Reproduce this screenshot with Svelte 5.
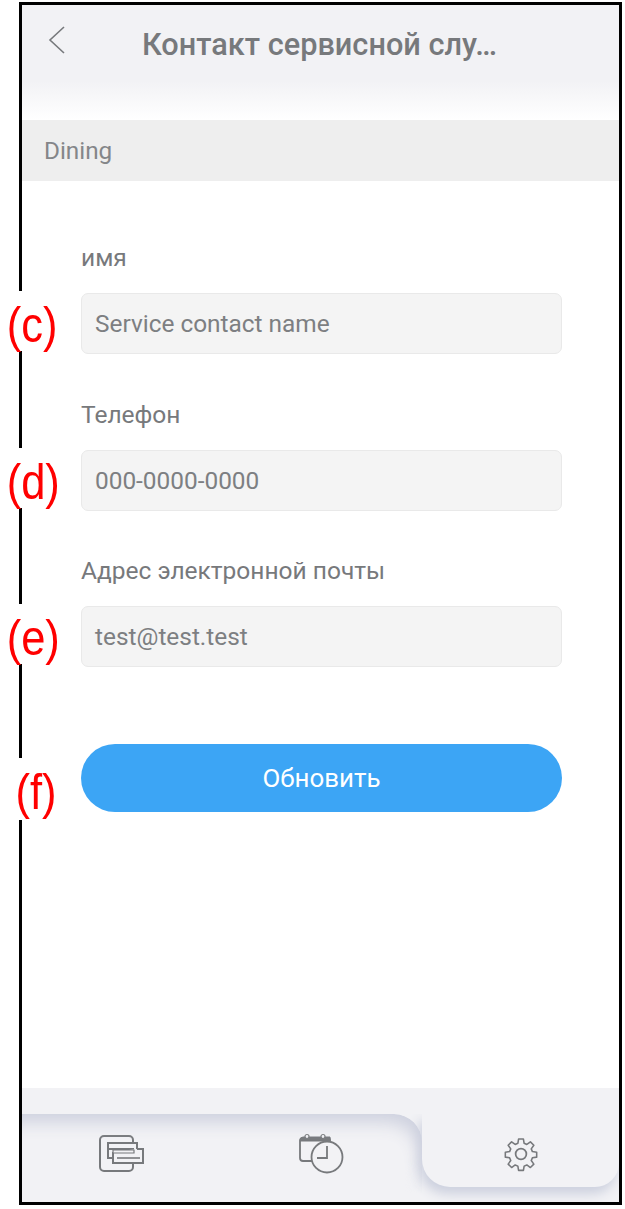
<script>
	const fields = [
		{ label: 'имя', value: 'Service contact name', mark: '(c)' },
		{ label: 'Телефон', value: '000-0000-0000', mark: '(d)' },
		{ label: 'Адрес электронной почты', value: 'test@test.test', mark: '(e)' }
	];
</script>

<div class="page">
	<div class="frame">
		<header class="header">
			<button class="back" aria-label="Назад">
				<svg width="18" height="30" viewBox="0 0 18 30" fill="none">
					<path d="M16 2L2 15L16 28" stroke="#77797c" stroke-width="1.6" />
				</svg>
			</button>
			<h1 class="title">Контакт сервисной слу…</h1>
		</header>

		<div class="section">Dining</div>

		<main class="form">
			{#each fields as field}
				<div class="field">
					<div class="label">{field.label}</div>
					<div class="input">
						{field.value}
						<span class="mark">{field.mark}</span>
					</div>
				</div>
			{/each}

			<button class="submit">
				Обновить
				<span class="mark mark-f">(f)</span>
			</button>
		</main>

		<footer class="footer">
			<div class="tabs">
				<div class="tab-panel">
					<div class="tab">
						<svg width="46" height="37" viewBox="0 0 46 37" fill="none" stroke="#77797c" stroke-width="2">
							<rect x="1" y="1" width="33" height="35" rx="4" />
							<rect x="9" y="8" width="29" height="15" fill="#f2f2f5" />
							<path d="M10 14H35" />
							<path d="M14 17V28H44V14H38" fill="#f2f2f5" />
							<path d="M14 15H35V18H14Z" fill="#f2f2f5" stroke-width="1.2" />
							<path d="M18 23H41" stroke-width="1.6" />
						</svg>
					</div>
					<div class="tab">
						<svg width="46" height="41" viewBox="0 0 46 41" fill="none" stroke="#77797c" stroke-width="1.8">
							<path d="M14 28H4Q1 28 1 25V8Q1 5 4 5H29Q31 5 31 7V10" />
							<path d="M1 8Q1 4 4 4H31V8H1Z" fill="#77797c" stroke-width="1" />
							<circle cx="8" cy="3.5" r="2" fill="#f2f2f5" stroke-width="1.2" />
							<circle cx="24" cy="3.5" r="2" fill="#f2f2f5" stroke-width="1.2" />
							<circle cx="28" cy="24" r="15.5" fill="#f2f2f5" />
							<path d="M28 13V25H18" />
						</svg>
					</div>
				</div>
				<div class="tab-wrap">
					<div class="tab tab-active">
						<svg width="38" height="38" viewBox="0 0 24 24" fill="none" stroke="#77797c" stroke-width="1.1" stroke-linejoin="round">
							<circle cx="12" cy="12" r="3.4" />
							<path d="M10.3 1.5h3.4l.5 3 1.9.8 2.5-1.8 2.4 2.4-1.8 2.5.8 1.9 3 .5v3.4l-3 .5-.8 1.9 1.8 2.5-2.4 2.4-2.5-1.8-1.9.8-.5 3h-3.4l-.5-3-1.9-.8-2.5 1.8-2.4-2.4 1.8-2.5-.8-1.9-3-.5v-3.4l3-.5.8-1.9-1.8-2.5 2.4-2.4 2.5 1.8 1.9-.8z" transform="translate(1.2 1.2) scale(.9)" />
						</svg>
					</div>
				</div>
			</div>
		</footer>
	</div>
</div>

<style>
	:global(body) {
		margin: 0;
		background: #fff;
	}

	.page {
		width: 625px;
		height: 1209px;
		padding: 2px 3px 4px 19px;
		box-sizing: border-box;
		font-family: Roboto, "Noto Sans", sans-serif;
	}

	.frame {
		height: 100%;
		box-sizing: border-box;
		border: 3px solid #000;
		display: flex;
		flex-direction: column;
		background: #fff;
	}

	.header {
		height: 115px;
		flex: none;
		padding: 20px 0 0 26px;
		box-sizing: border-box;
		display: flex;
		align-items: flex-start;
		background: linear-gradient(#f2f2f5 0, #f2f2f5 76px, #fff 115px);
	}

	.back {
		border: none;
		background: none;
		padding: 0;
		width: 18px;
		height: 30px;
	}

	.title {
		margin: 0 0 0 76px;
		font-size: 30.7px;
		font-weight: 500;
		line-height: 40px;
		color: #77797c;
		white-space: nowrap;
	}

	.section {
		height: 61px;
		flex: none;
		background: #eeeeee;
		padding-left: 22px;
		font-size: 24.3px;
		line-height: 61px;
		color: #848689;
	}

	.form {
		flex: 1;
		padding: 60px 57px 0 59px;
		display: flex;
		flex-direction: column;
	}

	.field {
		margin-bottom: 43.5px;
	}

	.label {
		font-size: 24.5px;
		line-height: 34px;
		color: #77797c;
		margin-bottom: 18px;
	}

	.input {
		position: relative;
		height: 61px;
		box-sizing: border-box;
		border: 1px solid #e9e9e9;
		border-radius: 7px;
		background: #f4f4f4;
		padding-left: 13px;
		font-size: 24.4px;
		line-height: 59px;
		color: #7d7f82;
	}

	.mark {
		position: absolute;
		left: -79px;
		top: -3px;
		width: 56px;
		height: 60px;
		background: #fff;
		color: #f00;
		font-family: "Liberation Sans", sans-serif;
		font-size: 50px;
		line-height: 68px;
		text-align: center;
		transform: scaleX(0.87);
	}

	.submit {
		position: relative;
		margin-top: 33.5px;
		height: 68px;
		border: none;
		border-radius: 34px;
		background: #3ca5f5;
		color: #fff;
		font-family: inherit;
		font-size: 25.9px;
		padding: 0;
	}

	.mark-f {
		left: -71px;
		top: 14px;
		width: 52px;
		height: 62px;
	}

	.footer {
		height: 114px;
		flex: none;
		background: #f2f2f5;
		padding-top: 26px;
		box-sizing: border-box;
	}

	.tabs {
		height: 88px;
		display: grid;
		grid-template-columns: 400px 197px;
		overflow: hidden;
	}

	.tab {
		display: flex;
		align-items: center;
		justify-content: center;
	}

	.tab-panel {
		position: relative;
		display: grid;
		grid-template-columns: 200px 200px;
		padding-bottom: 10px;
		box-sizing: border-box;
	}

	/* the panel's inner shadow dies out before it meets the active tab's own */
	.tab-panel::before {
		content: '';
		position: absolute;
		inset: 0;
		border-top-right-radius: 28px;
		box-shadow: inset -8px 16px 18px -8px #cdd0de;
		mask-image: linear-gradient(#000 55%, transparent 90%);
	}

	.tab-wrap {
		background: #f2f2f5;
	}

	.tab-active {
		height: 73px;
		padding-top: 7px;
		box-sizing: border-box;
		border-radius: 0 0 24px 28px;
		box-shadow: -3px 7px 12px #ccd0de;
	}
</style>
